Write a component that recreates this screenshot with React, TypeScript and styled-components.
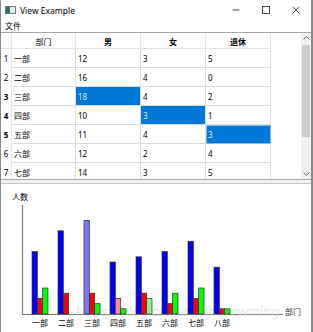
import * as React from 'react'
import styled, { createGlobalStyle, css } from 'styled-components'

const GlobalStyle = createGlobalStyle`
  html, body {
    margin: 0;
    padding: 0;
    background: #ffffff;
  }
  body {
    font-family: 'Noto Sans', 'Noto Sans CJK SC', sans-serif;
    font-size: 8px;
    color: #000000;
  }
`

type Dept = { name: string; male: number; female: number; retired: number }

const rows: Dept[] = [
  { name: '一部', male: 12, female: 3, retired: 5 },
  { name: '二部', male: 16, female: 4, retired: 0 },
  { name: '三部', male: 18, female: 4, retired: 2 },
  { name: '四部', male: 10, female: 3, retired: 1 },
  { name: '五部', male: 11, female: 4, retired: 3 },
  { name: '六部', male: 12, female: 2, retired: 4 },
  { name: '七部', male: 14, female: 3, retired: 5 },
]

const chartRows: Dept[] = [...rows, { name: '八部', male: 9, female: 1, retired: 1 }]

// selected cells: [row, col] with col 1=男 2=女 3=退休
const selected = ['2-1', '3-2', '4-3']
const current = '4-3'

const Window = styled.div`
  width: 313px;
  height: 332px;
  box-sizing: border-box;
  border-left: 1px solid #8a8a8a;
  border-right: 2px solid #8a8a8a;
  display: flex;
  flex-direction: column;
  overflow: hidden;
  background: #ffffff;
`

const TitleBar = styled.div`
  height: 19px;
  display: flex;
  align-items: center;
  flex-shrink: 0;
`

const AppIcon = styled.svg`
  margin-left: 4px;
  margin-right: 4px;
`

const Title = styled.span`
  font-size: 8.5px;
  flex: 1;
  padding-top: 1px;
`

const WinButton = styled.div`
  width: 30px;
  height: 19px;
  display: flex;
  align-items: center;
  justify-content: center;
`

const MenuBar = styled.div`
  height: 13px;
  display: flex;
  align-items: center;
  padding-left: 4px;
  flex-shrink: 0;
`

const TablePane = styled.div`
  height: 148px;
  box-sizing: border-box;
  border-top: 1px solid #a8a8a8;
  border-bottom: 1px solid #a8a8a8;
  display: flex;
  flex-shrink: 0;
`

const Grid = styled.div`
  flex: 1;
  overflow: hidden;
  display: grid;
  grid-template-columns: 11px 64px 65px 65px 65px 1fr;
  grid-auto-rows: 19px;
  grid-template-rows: 16px;
  align-content: start;
`

const HeadCell = styled.div<{ $bold?: boolean }>`
  box-sizing: border-box;
  border-right: 1px solid #e5e5e5;
  border-bottom: 1px solid #e5e5e5;
  display: flex;
  align-items: center;
  justify-content: center;
  font-weight: ${(p) => (p.$bold ? 700 : 400)};
  padding-top: 1px;
`

const RowHead = styled.div<{ $bold?: boolean }>`
  box-sizing: border-box;
  border-right: 1px solid #e5e5e5;
  display: flex;
  align-items: center;
  justify-content: center;
  font-weight: ${(p) => (p.$bold ? 700 : 400)};
`

const Cell = styled.div<{ $sel?: boolean; $cur?: boolean }>`
  box-sizing: border-box;
  border-right: 1px solid #dcdcdc;
  border-bottom: 1px solid #dcdcdc;
  display: flex;
  align-items: center;
  padding-left: 2px;
  padding-top: 1px;
  ${(p) =>
    p.$sel &&
    css`
      background: #0078d7;
      color: #d8ecff;
    `}
  ${(p) =>
    p.$cur &&
    css`
      outline: 1px solid #8ab8e0;
      outline-offset: -1px;
    `}
`

const Blank = styled.div`
  border-bottom: 1px solid transparent;
`

const ScrollBar = styled.div`
  width: 10px;
  background: #f0f0f0;
  display: flex;
  flex-direction: column;
  align-items: center;
`

const Arrow = styled.div`
  height: 10px;
  width: 100%;
  display: flex;
  align-items: center;
  justify-content: center;
`

const Thumb = styled.div`
  margin-top: 2px;
  width: 8px;
  height: 92px;
  background: #cdcdcd;
`

const Track = styled.div`
  flex: 1;
`

const Splitter = styled.div`
  height: 3px;
  background: #f0f0f0;
  flex-shrink: 0;
`

const ChartPane = styled.div`
  flex: 1;
  border-top: 1px solid #c4c4c4;
`

const ChartSvg = styled.svg`
  display: block;
  font-family: 'Noto Sans CJK SC', 'Noto Sans', sans-serif;
`

const colors = ['#0000ff', '#ff0000', '#00ff00']
const lightColors = ['#7878ff', '#ff8c8c', '#8cf08c']

const Chart = () => {
  const base = 314
  const unit = 5.2
  const bw = 5.33
  return (
    <ChartSvg width={310} height={148} viewBox="1 184 310 148">
      <text x={12} y={200} fontSize={8}>
        人数
      </text>
      <line x1={22.5} y1={205} x2={22.5} y2={base} stroke="#888" strokeWidth={1.3} />
      <line x1={22} y1={base + 0.5} x2={283} y2={base + 0.5} stroke="#777" strokeWidth={1} />
      <text x={285} y={315} fontSize={8} fill="#333">
        部门
      </text>
      <text
        x={76}
        y={316}
        fontSize={13}
        fill="#ffffff"
        fillOpacity={0.5}
        stroke="#9a9a9a"
        strokeOpacity={0.3}
        strokeWidth={0.6}
        fontFamily="'Noto Sans', sans-serif"
      >
        https://blog.csdn.net/hucewming
      </text>
      {chartRows.map((d, i) => {
        const x0 = 32 + 26 * i
        const vals = [d.male, d.female, d.retired]
        return (
          <g key={d.name}>
            {vals.map((v, j) =>
              v > 0 ? (
                <rect
                  key={j}
                  x={x0 + j * bw}
                  y={base - v * unit}
                  width={bw}
                  height={v * unit}
                  fill={selected.includes(`${i}-${j + 1}`) ? lightColors[j] : colors[j]}
                  stroke="#333"
                  strokeWidth={0.7}
                />
              ) : null
            )}
            <text x={x0 + 8} y={326} fontSize={8} textAnchor="middle">
              {d.name}
            </text>
          </g>
        )
      })}
    </ChartSvg>
  )
}

export default function App() {
  return (
    <>
      <GlobalStyle />
      <Window>
        <TitleBar>
          <AppIcon width={11} height={8} viewBox="0 0 11 8">
            <rect x={0.5} y={0.5} width={10} height={7} fill="#ffffff" stroke="#6c7a80" />
            <rect x={1} y={1} width={4} height={6} fill="#2d6e6a" />
            <rect x={5} y={1} width={5} height={6} fill="#e8eef0" />
          </AppIcon>
          <Title>View Example</Title>
          <WinButton>
            <svg width={8} height={8} viewBox="0 0 8 8">
              <line x1={0.5} y1={4} x2={7.5} y2={4} stroke="#222" strokeWidth={0.8} />
            </svg>
          </WinButton>
          <WinButton>
            <svg width={8} height={8} viewBox="0 0 8 8">
              <rect x={0.5} y={0.5} width={7} height={7} fill="none" stroke="#222" strokeWidth={0.8} />
            </svg>
          </WinButton>
          <WinButton>
            <svg width={8} height={8} viewBox="0 0 8 8">
              <path d="M0.5 0.5 L7.5 7.5 M7.5 0.5 L0.5 7.5" stroke="#222" strokeWidth={0.8} />
            </svg>
          </WinButton>
        </TitleBar>
        <MenuBar>文件</MenuBar>
        <TablePane>
          <Grid>
            <HeadCell />
            <HeadCell>部门</HeadCell>
            <HeadCell $bold>男</HeadCell>
            <HeadCell $bold>女</HeadCell>
            <HeadCell $bold>退休</HeadCell>
            <Blank />
            {rows.map((r, i) => {
              const vals = [r.name, r.male, r.female, r.retired]
              return (
                <React.Fragment key={r.name}>
                  <RowHead $bold={selected.some((s) => s.startsWith(`${i}-`))}>{i + 1}</RowHead>
                  {vals.map((v, j) => (
                    <Cell key={j} $sel={selected.includes(`${i}-${j}`)} $cur={current === `${i}-${j}`}>
                      {v}
                    </Cell>
                  ))}
                  <Blank />
                </React.Fragment>
              )
            })}
          </Grid>
          <ScrollBar>
            <Arrow>
              <svg width={7} height={4} viewBox="0 0 7 4">
                <path d="M0.5 3.5 L3.5 0.7 L6.5 3.5" fill="none" stroke="#555" strokeWidth={0.9} />
              </svg>
            </Arrow>
            <Thumb />
            <Track />
            <Arrow>
              <svg width={7} height={4} viewBox="0 0 7 4">
                <path d="M0.5 0.5 L3.5 3.3 L6.5 0.5" fill="none" stroke="#555" strokeWidth={0.9} />
              </svg>
            </Arrow>
          </ScrollBar>
        </TablePane>
        <Splitter />
        <ChartPane>
          <Chart />
        </ChartPane>
      </Window>
    </>
  )
}
